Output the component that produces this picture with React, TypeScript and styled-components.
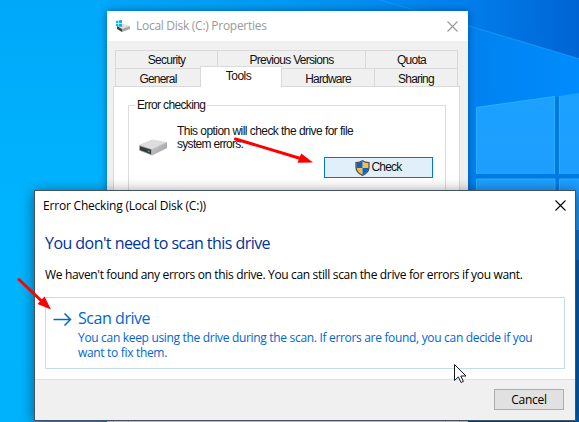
import React from "react";
import styled, { createGlobalStyle } from "styled-components";

const Global = createGlobalStyle`
  * { box-sizing: border-box; }
  html, body { margin: 0; padding: 0; overflow: hidden; }
  button, h1, h2, p { margin: 0; padding: 0; font: inherit; font-weight: 400; }
`;

const SYSTEM = '"Open Sans", "Noto Sans", sans-serif';
const CLASSIC = '"Liberation Sans", Arial, sans-serif';

const Desktop = styled.main`
  position: relative;
  width: 579px;
  height: 422px;
  overflow: hidden;
  background: #00a8fa;
`;

const Wallpaper = styled.svg`
  position: absolute;
  inset: 0;
`;

const Text = styled.span<{ $spacing?: number }>`
  white-space: nowrap;
  letter-spacing: ${(p) => p.$spacing ?? 0}px;
`;

const PropertiesWindow = styled.section`
  position: absolute;
  left: 107px;
  top: 11px;
  width: 361px;
  height: 430px;
  display: flex;
  flex-direction: column;
  background: #f0f0f0;
  box-shadow: 0 0 7px rgba(0, 30, 70, 0.5);
  font: 12px/13px ${CLASSIC};
  color: #111;
`;

const PropertiesTitle = styled.header`
  flex: none;
  height: 30px;
  padding: 0 10px 0 8px;
  display: flex;
  align-items: center;
  background: #fff;
  font: 12px/16px ${SYSTEM};
  color: #999;
`;

const TitleLabel = styled.div`
  flex: 1;
  padding-left: 4px;
  display: flex;
`;

const TabStrip = styled.nav`
  flex: none;
  margin: 9px 0 0 8px;
  width: 343px;
  border: 1px solid #d9d9d9;
  border-bottom: 0;
`;

const TabRow = styled.div<{ $columns: string }>`
  display: grid;
  grid-template-columns: ${(p) => p.$columns};
  height: 17px;
  & + & {
    height: 19px;
    border-top: 1px solid #d9d9d9;
  }
`;

const Tab = styled.div<{ $active?: boolean }>`
  display: flex;
  justify-content: center;
  align-items: center;
  padding-top: 2px;
  border-right: 1px solid #d9d9d9;
  &:last-child { border-right: 0; }
  ${(p) =>
    p.$active &&
    `
    height: 21px;
    margin: -3px 0 0 -1px;
    padding: 0 5px 1px 0;
    background: #fff;
    border: 1px solid #d9d9d9;
    border-bottom: 0;
    z-index: 1;
  `}
`;

const TabPanel = styled.div`
  flex: 1;
  min-height: 0;
  margin: -1px 8px 0 6px;
  padding: 18px 13px 0 14px;
  background: #fff;
  border: 1px solid #d9d9d9;
`;

const Group = styled.div`
  height: 320px;
  border: 1px solid #dcdcdc;
  display: flex;
  flex-direction: column;
`;

const Legend = styled.div`
  align-self: flex-start;
  height: 14px;
  margin: -7px 0 0 6px;
  padding: 0 2px;
  background: #fff;
`;

const CheckInfo = styled.div`
  display: flex;
  margin: 12px 0 0 9px;
  height: 27px;
`;

const DriveSlot = styled.div`
  width: 39px;
  padding-top: 13px;
`;

const Lines = styled.div`
  display: flex;
  flex-direction: column;
`;

const CheckButton = styled.button`
  margin: 5px 0 0 195px;
  width: 109px;
  height: 21px;
  display: flex;
  align-items: center;
  justify-content: center;
  gap: 1px;
  color: #111;
  border: 1px solid #0078d7;
  background: #e1effb;
`;

const Dialog = styled.section`
  position: absolute;
  left: 34px;
  top: 190px;
  width: 542px;
  height: 231px;
  display: flex;
  flex-direction: column;
  background: #fff;
  border: 1px solid #435365;
  box-shadow: 0 2px 13px rgba(0, 0, 0, 0.48);
  font: 12px/15px ${SYSTEM};
  color: #000;
`;

const DialogTitle = styled.header`
  height: 29px;
  padding: 0 9px 0 8px;
  display: flex;
  align-items: center;
  justify-content: space-between;
`;

const DialogBody = styled.div`
  flex: 1;
  padding: 11px 10px 0;
`;

const Heading = styled.h1`
  height: 24px;
  font-size: 16px;
  line-height: 24px;
  color: #003399;
`;

const Message = styled.p`
  margin-top: 12px;
  height: 15px;
`;

const CommandLink = styled.button`
  margin-top: 15px;
  width: 520px;
  height: 72px;
  padding: 9px 0 0 7px;
  display: flex;
  align-items: flex-start;
  gap: 6px;
  text-align: left;
  color: #0066d4;
  border: 1px solid #c3daf0;
  background: #fff;
`;

const CommandTitle = styled.span`
  height: 23px;
  font-size: 16px;
  line-height: 23px;
`;

const Footer = styled.footer`
  height: 41px;
  padding: 9px 11px 0;
  display: flex;
  justify-content: flex-end;
  background: #f0f0f0;
  border-top: 1px solid #dfdfdf;
`;

const CancelButton = styled.button`
  width: 70px;
  height: 21px;
  background: #e1e1e1;
  border: 1px solid #adadad;
  color: #000;
`;

const Overlay = styled.svg`
  position: absolute;
  inset: 0;
  pointer-events: none;
`;

function CloseIcon({ color }: { color: string }) {
  return (
    <svg width="11" height="11" viewBox="0 0 11 11">
      <path d="M.5.5l10 10M10.5.5l-10 10" stroke={color} strokeWidth="1.1" fill="none" />
    </svg>
  );
}

function SmallDriveIcon() {
  return (
    <svg width="17" height="14" viewBox="0 0 17 14">
      <path d="M2 7l6-2 7 2-8 3z" fill="#dedede" />
      <path d="M2 7l5 3v3l-5-3z" fill="#3c4640" />
      <path d="M7 10l8-3v3l-8 3z" fill="#a4a6a8" />
      <path d="M1 2l2.4-.5v2.7H1zM4 1.3L7 1v3.2H4zM1 4.9h2.4v2.5L1 7zM4 4.9h3V8l-3-.5z" fill="#08b4ea" />
    </svg>
  );
}

function DriveIcon() {
  return (
    <svg width="30" height="18" viewBox="0 0 30 18">
      <defs>
        <linearGradient id="driveSide" x1="0" y1="0" x2="1" y2="1">
          <stop offset="0" stopColor="#cfd0d2" />
          <stop offset="1" stopColor="#97989c" />
        </linearGradient>
      </defs>
      <path d="M1 7L14 1.500l15 2.500-14 7z" fill="#dddde0" />
      <path d="M14 11l15-7v6l-15 7.500z" fill="url(#driveSide)" />
      <path d="M1 7l13 4v6.500L1 12.500z" fill="#a5a7a9" />
      <path d="M2 8.300l11 3.400v4.500L2 12z" fill="#363c3a" />
      <path d="M9.500 12.200l2.200.7v1.300l-2.200-.7z" fill="#37b34a" />
    </svg>
  );
}

function ShieldIcon() {
  return (
    <svg width="15" height="16" viewBox="0 0 15 16">
      <defs>
        <clipPath id="shieldShape">
          <path d="M7.5 1.3C5.8 2.6 3.6 3 1.4 3v4c0 3.5 2.6 6.3 6.1 7.7 3.5-1.4 6.1-4.2 6.1-7.7V3c-2.2 0-4.4-.4-6.1-1.7z" />
        </clipPath>
      </defs>
      <g clipPath="url(#shieldShape)">
        <path d="M7.5 0H15v8H7.5zM0 8h7.5v8H0z" fill="#ffbd2f" />
        <path d="M0 0h7.5v8H0zM7.5 8H15v8H7.5z" fill="#0864c8" />
      </g>
      <path
        d="M7.5.8C5.8 2.2 3.3 2.7 1 2.7V7c0 3.8 2.8 6.8 6.5 8.3C11.2 13.8 14 10.8 14 7V2.7C11.7 2.7 9.2 2.2 7.5.8z"
        fill="none"
        stroke="#4c5358"
        strokeWidth="1.3"
      />
    </svg>
  );
}

function ArrowIcon() {
  return (
    <svg width="19" height="24" viewBox="0 0 19 24">
      <path d="M.5 12.5h17M11.5 6.5l6 6-6 6" fill="none" stroke="#0067d0" strokeWidth="1.5" />
    </svg>
  );
}

function Scene() {
  return (
    <Wallpaper width="579" height="422" viewBox="0 0 579 422">
      <defs>
        <linearGradient id="sky" x1="0" x2="1" y1="0" y2="0">
          <stop offset="0" stopColor="#00acfc" />
          <stop offset=".5" stopColor="#0098f2" />
          <stop offset=".8" stopColor="#007fec" />
          <stop offset="1" stopColor="#0064d4" />
        </linearGradient>
        <linearGradient id="left" x1="0" x2="0" y1="0" y2="1">
          <stop offset="0" stopColor="#00a8f9" />
          <stop offset=".5" stopColor="#00b4ff" />
          <stop offset="1" stopColor="#00b2fb" />
        </linearGradient>
        <linearGradient id="beam" x1="0" x2="1" y1="0" y2="0">
          <stop offset="0" stopColor="#0082f0" />
          <stop offset="1" stopColor="#008bfc" />
        </linearGradient>
        <linearGradient id="pane" x1="0" x2="0" y1="0" y2="1">
          <stop offset="0" stopColor="#1ba1ff" />
          <stop offset="1" stopColor="#209cff" />
        </linearGradient>
      </defs>
      <rect width="579" height="422" fill="url(#sky)" />
      <rect width="108" height="422" fill="url(#left)" />
      <path d="M468 26l111 33v363H468z" fill="url(#beam)" />
      <path d="M380 0l89 26 110 33" stroke="#1594f7" strokeWidth="1.2" fill="none" />
      <path d="M476 107.500l79-11V174h-79zM559 96l20-3v81h-20zM476 179h79v15h-79zM559 179h20v60h-20z" fill="url(#pane)" />
      <path d="M555 174V97h4v77h20v5h-20v15h-4v-15h-79v-5z" fill="#007ae3" />
      <path d="M476.500 174v-66.500l78-11V174M559.500 174V96M476.500 194v-15H555v15M559.500 194v-15H579" fill="none" stroke="#29b1fc" />
      <rect x="576" y="230" width="3" height="30" fill="#0877d9" />
      <rect x="576" y="260" width="3" height="162" fill="#0060b7" />
      <rect x="468" y="420" width="111" height="2" fill="#0057a8" />
    </Wallpaper>
  );
}

function Annotations() {
  return (
    <Overlay width="579" height="422" viewBox="0 0 579 422">
      <path d="M235.500 139l65 19.500" stroke="#fe0000" strokeWidth="3" strokeLinecap="round" />
      <path d="M313 162.500l-15.500.300 3.700-9.300z" fill="#fe0000" />
      <path d="M19 279.500l23 22" stroke="#fe0000" strokeWidth="3" strokeLinecap="round" />
      <path d="M51 309.500l-13.500-5.500 7-7.500z" fill="#fe0000" />
      <path
        d="M454.500 364.500v16l3.800-3.600 2.800 5.600 2.300-1.100-2.600-5.400h5.200z"
        fill="#fff"
        stroke="#17172a"
        strokeWidth="1"
      />
    </Overlay>
  );
}

export default function App() {
  return (
    <Desktop>
      <Global />
      <Scene />
      <PropertiesWindow>
        <PropertiesTitle>
          <SmallDriveIcon />
          <TitleLabel>
            <Text $spacing={-0.28}>Local Disk (C:) Properties</Text>
          </TitleLabel>
          <CloseIcon color="#999" />
        </PropertiesTitle>
        <TabStrip>
          <TabRow $columns="102px 148px 1fr">
            <Tab><Text $spacing={-0.7}>Security</Text></Tab>
            <Tab><Text $spacing={-0.7}>Previous Versions</Text></Tab>
            <Tab><Text $spacing={-0.7}>Quota</Text></Tab>
          </TabRow>
          <TabRow $columns="85px 81px 93px 1fr">
            <Tab><Text $spacing={-0.8}>General</Text></Tab>
            <Tab $active><Text $spacing={-0.5}>Tools</Text></Tab>
            <Tab><Text $spacing={-0.8}>Hardware</Text></Tab>
            <Tab><Text $spacing={-0.8}>Sharing</Text></Tab>
          </TabRow>
        </TabStrip>
        <TabPanel>
          <Group>
            <Legend><Text $spacing={-0.65}>Error checking</Text></Legend>
            <CheckInfo>
              <DriveSlot><DriveIcon /></DriveSlot>
              <Lines>
                <Text $spacing={-0.55}>This option will check the drive for file</Text>
                <Text $spacing={-0.7}>system errors.</Text>
              </Lines>
            </CheckInfo>
            <CheckButton>
              <ShieldIcon />
              <Text $spacing={-0.8}>Check</Text>
            </CheckButton>
          </Group>
        </TabPanel>
      </PropertiesWindow>
      <Dialog>
        <DialogTitle>
          <Text $spacing={-0.2}>Error Checking (Local Disk (C:))</Text>
          <CloseIcon color="#000" />
        </DialogTitle>
        <DialogBody>
          <Heading><Text $spacing={-0.55}>You don't need to scan this drive</Text></Heading>
          <Message>
            <Text $spacing={-0.34}>
              We haven't found any errors on this drive. You can still scan the drive for errors if you want.
            </Text>
          </Message>
          <CommandLink>
            <ArrowIcon />
            <Lines>
              <CommandTitle><Text $spacing={-0.45}>Scan drive</Text></CommandTitle>
              <Text $spacing={-0.32}>
                You can keep using the drive during the scan. If errors are found, you can decide if you
                <br />
                want to fix them.
              </Text>
            </Lines>
          </CommandLink>
        </DialogBody>
        <Footer>
          <CancelButton><Text $spacing={-0.3}>Cancel</Text></CancelButton>
        </Footer>
      </Dialog>
      <Annotations />
    </Desktop>
  );
}
